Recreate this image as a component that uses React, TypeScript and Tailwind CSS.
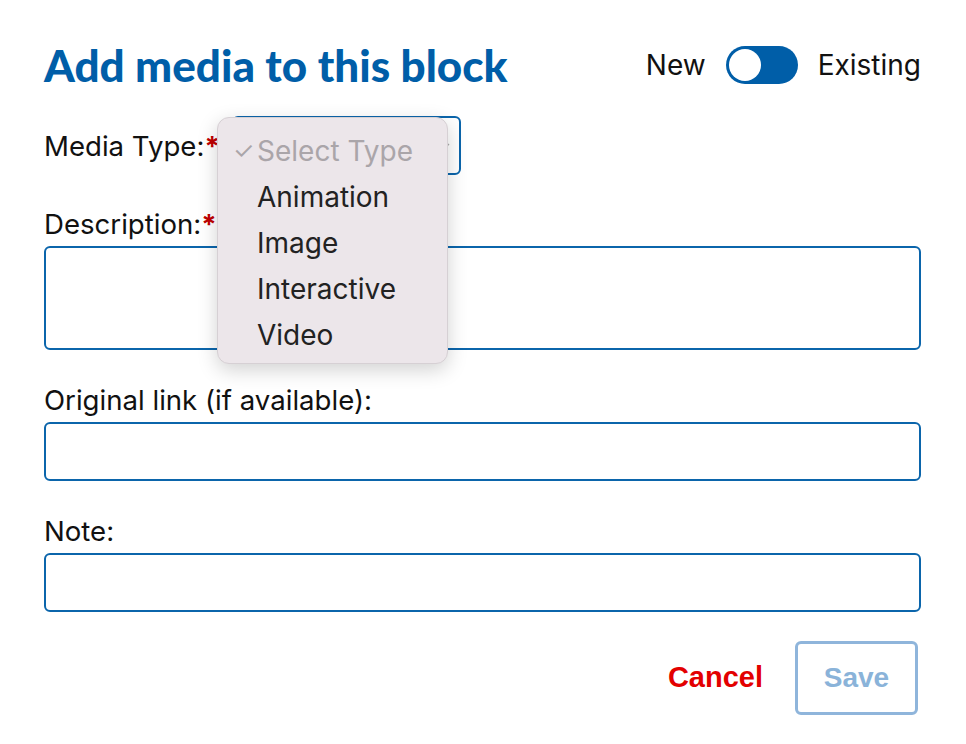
import { useState } from "react";

const options = ["Animation", "Image", "Interactive", "Video"];

const Label = ({ text, required }: { text: string; required?: boolean }) => (
  <label className="block h-[32px] leading-[32px] text-[27.6px] text-[#111]">
    {text}
    {required && <span className="text-[#c00000] font-bold">*</span>}
  </label>
);

export default function App() {
  const [existing, setExisting] = useState(false);

  return (
    <div className="min-h-screen bg-white font-['Inter',sans-serif] text-[#111]">
      <div className="px-[44px] pt-[36px] pr-[45px]">
        {/* header */}
        <div className="flex items-center justify-between h-[58px]">
          <h1 className="font-['Lato',sans-serif] font-black text-[44px] text-[#005ea8]">
            Add media to this block
          </h1>
          <div className="flex items-center gap-[20px] text-[28px]">
            <span>New</span>
            <button
              onClick={() => setExisting(!existing)}
              className="w-[72px] h-[38px] rounded-full bg-[#005ea8] p-[3px] flex"
            >
              <span
                className={
                  existing
                    ? "ml-auto w-[32px] h-[32px] rounded-full bg-white"
                    : "w-[32px] h-[32px] rounded-full bg-white"
                }
              />
            </button>
            <span>Existing</span>
          </div>
        </div>

        {/* media type */}
        <div className="relative flex items-center gap-[12px] mt-[22px] h-[59px]">
          <Label text="Media Type:" required />
          <div className="w-[229px] h-[59px] border-2 border-[#0b65ab] rounded-[6px] flex items-center justify-end pr-[8px]">
            <svg width="12" height="12" viewBox="0 0 12 12">
              <path d="M2 4 L6 8 L10 4" fill="none" stroke="#aaa" strokeWidth="1.3" />
            </svg>
          </div>
          <div className="absolute left-[173px] top-[1px] w-[231px] pt-[10px] pb-[5px] bg-[#ece6ea] border border-[#d6d0d4] rounded-[12px] shadow-[0_6px_20px_rgba(0,0,0,0.18)]">
            <div className="h-[46px] flex items-center pl-[15px] text-[28px] text-[#aaa5a9]">
              <span className="w-[24px] text-[24px]">✓</span>
              <span>Select Type</span>
            </div>
            {options.map((o) => (
              <div key={o} className="h-[46px] flex items-center pl-[39px] text-[28px] text-[#222]">
                {o}
              </div>
            ))}
          </div>
        </div>

        {/* description */}
        <div className="mt-[33px]">
          <Label text="Description:" required />
          <textarea className="mt-[6px] block w-full h-[104px] border-2 border-[#0b65ab] rounded-[6px] resize-none" />
        </div>

        <div className="mt-[34px]">
          <Label text="Original link (if available):" />
          <input className="mt-[6px] block w-full h-[59px] border-2 border-[#0b65ab] rounded-[6px]" />
        </div>

        <div className="mt-[34px]">
          <Label text="Note:" />
          <input className="mt-[6px] block w-full h-[59px] border-2 border-[#0b65ab] rounded-[6px]" />
        </div>

        {/* actions */}
        <div className="flex items-center justify-end gap-[32px] mt-[29px] pr-[3px]">
          <button className="font-['Liberation_Sans',sans-serif] font-bold text-[29px] text-[#e30000]">
            Cancel
          </button>
          <button className="w-[123px] h-[74px] border-[3px] border-[#8fb5db] rounded-[6px] font-['Liberation_Sans',sans-serif] font-bold text-[28px] text-[#8ab3d9]">
            Save
          </button>
        </div>
      </div>
    </div>
  );
}
